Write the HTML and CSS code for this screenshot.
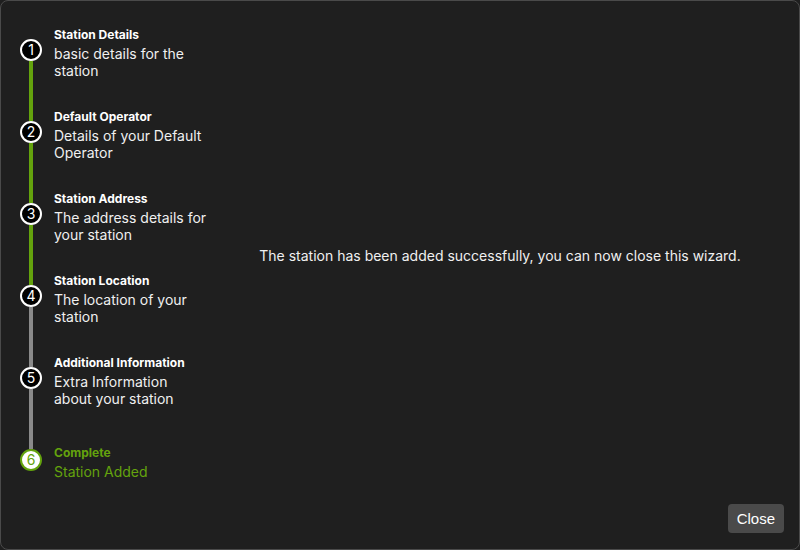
FILE: index.html
```html
<!DOCTYPE html>
<html>
<head>
<meta charset="utf-8">
<link rel="stylesheet" href="styles.css">
</head>
<body>
<div class="window">
  <div class="content">
    <div class="steps">
      <div class="step">
        <div class="rail"><span class="seg seg-none"></span><span class="dot">1</span><span class="seg seg-done"></span></div>
        <div class="text"><div class="title">Station Details</div><div class="desc">basic details for the station</div></div>
      </div>
      <div class="step">
        <div class="rail"><span class="seg seg-done"></span><span class="dot">2</span><span class="seg seg-done"></span></div>
        <div class="text"><div class="title">Default Operator</div><div class="desc">Details of your Default Operator</div></div>
      </div>
      <div class="step">
        <div class="rail"><span class="seg seg-done"></span><span class="dot">3</span><span class="seg seg-done"></span></div>
        <div class="text"><div class="title">Station Address</div><div class="desc">The address details for your station</div></div>
      </div>
      <div class="step">
        <div class="rail"><span class="seg seg-done"></span><span class="dot">4</span><span class="seg seg-todo"></span></div>
        <div class="text"><div class="title">Station Location</div><div class="desc">The location of your station</div></div>
      </div>
      <div class="step">
        <div class="rail"><span class="seg seg-todo"></span><span class="dot">5</span><span class="seg seg-todo"></span></div>
        <div class="text"><div class="title">Additional Information</div><div class="desc">Extra Information about your station</div></div>
      </div>
      <div class="step step-active">
        <div class="rail"><span class="seg seg-todo"></span><span class="dot">6</span><span class="seg seg-none"></span></div>
        <div class="text"><div class="title">Complete</div><div class="desc">Station Added</div></div>
      </div>
    </div>
    <div class="main">
      <p class="message">The station has been added successfully, you can now close this wizard.</p>
    </div>
  </div>
  <div class="footer">
    <button class="btn">Close</button>
  </div>
</div>
</body>
</html>
```

FILE: styles.css
```css
* { box-sizing: border-box; }
html, body { margin: 0; padding: 0; background: #1f1f1f; }
body { width: 800px; height: 550px; overflow: hidden; font-family: Inter, "Noto Sans", sans-serif; color: #f2f2f2; }
.window {
  width: 800px; height: 550px;
  background: #1f1f1f;
  border: 1px solid #4a4a4a;
  border-radius: 8px;
  display: flex; flex-direction: column;
}
.content { display: flex; padding-top: 8px; }
.steps { width: 200px; flex: none; padding-left: 19px; display: flex; flex-direction: column; }
.step { height: 82px; display: flex; align-items: center; }
.rail { width: 22px; flex: none; height: 100%; display: flex; flex-direction: column; align-items: center; margin-right: 12px; }
.seg { flex: 1; width: 4px; }
.seg-none { background: transparent; }
.seg-done { background: #64a30d; }
.seg-todo { background: #8a8a8a; }
.dot {
  width: 22px; height: 22px; flex: none;
  border: 2px solid #ffffff; border-radius: 50%;
  background: #000000; color: #ffffff;
  display: flex; align-items: center; justify-content: center;
  font-size: 14px; line-height: 1;
}
.text { width: 154px; flex: none; padding-top: 5px; }
.title { font-size: 12px; font-weight: 700; line-height: 15px; color: #ffffff; margin-bottom: 3px; }
.desc { font-size: 14px; line-height: 17px; color: #f0f0f0; }
.step-active .dot { background: #ffffff; border-color: #64a30d; color: #64a30d; }
.step-active .title, .step-active .desc { color: #64a30d; }
.main { flex: 1; display: flex; align-items: center; justify-content: center; }
.message { margin: 0; font-size: 14px; color: #f0f0f0; }
.footer { display: flex; justify-content: flex-end; padding: 3px 15px 0 0; }
.btn {
  font-family: "Liberation Sans", Arial, sans-serif; font-size: 15px;
  background: #4a4a4a; color: #ffffff; border: none; border-radius: 4px;
  height: 29px; padding: 0 9px;
}
```
